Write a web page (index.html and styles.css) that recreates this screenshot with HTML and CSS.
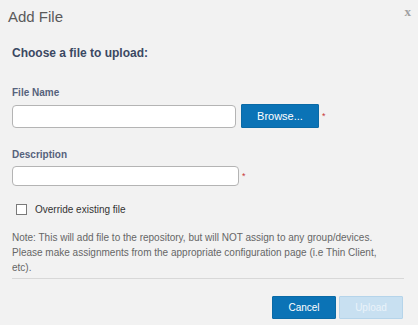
FILE: index.html
```html
<!DOCTYPE html>
<html lang="en">
<head>
    <meta charset="UTF-8">
    <title>Add File</title>
    <link rel="stylesheet" href="styles.css">
</head>
<body>
    <div class="dialog">
        <!-- Cabecera -->
        <div class="dialog-header">
            <h1>Add File</h1>
            <span class="close">x</span>
        </div>

        <h2>Choose a file to upload:</h2>

        <form id="uploadForm">
            <label class="field-label">File Name</label>
            <div class="field-row file-row">
                <input type="text" class="text-input file-input">
                <button type="button" class="btn btn-primary browse">Browse...</button>
                <span class="required">*</span>
            </div>

            <label class="field-label desc-label">Description</label>
            <div class="field-row">
                <input type="text" class="text-input desc-input">
                <span class="required">*</span>
            </div>

            <label class="check-row">
                <span class="checkbox"></span>
                Override existing file
            </label>

            <div class="note-box">
                <p class="note">Note: This will add file to the repository, but will NOT assign to any group/devices. Please make assignments from the appropriate configuration page (i.e Thin Client, etc).</p>
            </div>

            <div class="dialog-footer">
                <button type="button" class="btn btn-primary">Cancel</button>
                <button type="button" class="btn btn-disabled" disabled>Upload</button>
            </div>
        </form>
    </div>
</body>
</html>
```

FILE: styles.css
```css
body {
    margin: 0;
    background: #f2f2f2;
    font-family: "Liberation Sans", Arial, sans-serif;
}
.dialog {
    padding: 0 14px 0 12px;
}
.dialog-header {
    display: flex;
    justify-content: space-between;
    align-items: flex-start;
    padding-top: 7px;
    margin-left: -4px;
}
.dialog-header h1 {
    margin: 0;
    font-size: 15px;
    line-height: 20px;
    font-weight: normal;
    color: #5a5a5a;
}
.close {
    font-family: "Liberation Serif", serif;
    font-weight: bold;
    font-size: 13px;
    line-height: 12px;
    color: #a0a0a0;
    margin-top: -1px;
    margin-right: -7px;
}
h2 {
    margin: 18px 0 0;
    font-size: 12px;
    line-height: 16px;
    color: #3b4862;
}
.field-label {
    display: block;
    margin-top: 25px;
    font-size: 10px;
    line-height: 14px;
    font-weight: bold;
    color: #56627c;
}
.desc-label {
    margin-top: 20px;
}
.field-row {
    display: flex;
    align-items: flex-end;
    margin-top: 4px;
}
.text-input {
    box-sizing: border-box;
    margin: 0;
    background: #fff;
    border: 1px solid #b4b4b4;
    border-radius: 4px;
}
.file-input {
    width: 224px;
    height: 23px;
}
.desc-input {
    width: 227px;
    height: 20px;
}
.required {
    align-self: center;
    margin-left: 3px;
    color: #c8373a;
    font-size: 9px;
    line-height: 9px;
}
.btn {
    box-sizing: border-box;
    margin: 0;
    border: 1px solid #0a6aa6;
    border-radius: 1px;
    font-family: "Liberation Sans", Arial, sans-serif;
    font-size: 10px;
    height: 23px;
    color: #fff;
}
.btn-primary {
    background: #0b73b6;
}
.browse {
    width: 78px;
    height: 24px;
    margin-left: 5px;
    font-size: 11px;
}
.btn-disabled {
    background: #c8e0f1;
    border-color: #b5d4ea;
    color: #eaf3fa;
}
.check-row {
    display: flex;
    align-items: center;
    gap: 8px;
    margin-top: 17px;
    padding-left: 4px;
    font-size: 10px;
    line-height: 13px;
    color: #333;
}
.checkbox {
    width: 11px;
    height: 11px;
    box-sizing: border-box;
    border: 1px solid #7a7a7a;
    background: #fff;
}
.note-box {
    margin-top: 14px;
    padding-bottom: 3px;
    border-bottom: 1px solid #d8d8d8;
}
.note {
    margin: 0;
    max-width: 378px;
    font-size: 10px;
    line-height: 15px;
    color: #666;
}
.dialog-footer {
    display: flex;
    justify-content: flex-end;
    gap: 3px;
    margin-top: 17px;
    margin-right: 1px;
}
.dialog-footer .btn {
    width: 64px;
}
```
